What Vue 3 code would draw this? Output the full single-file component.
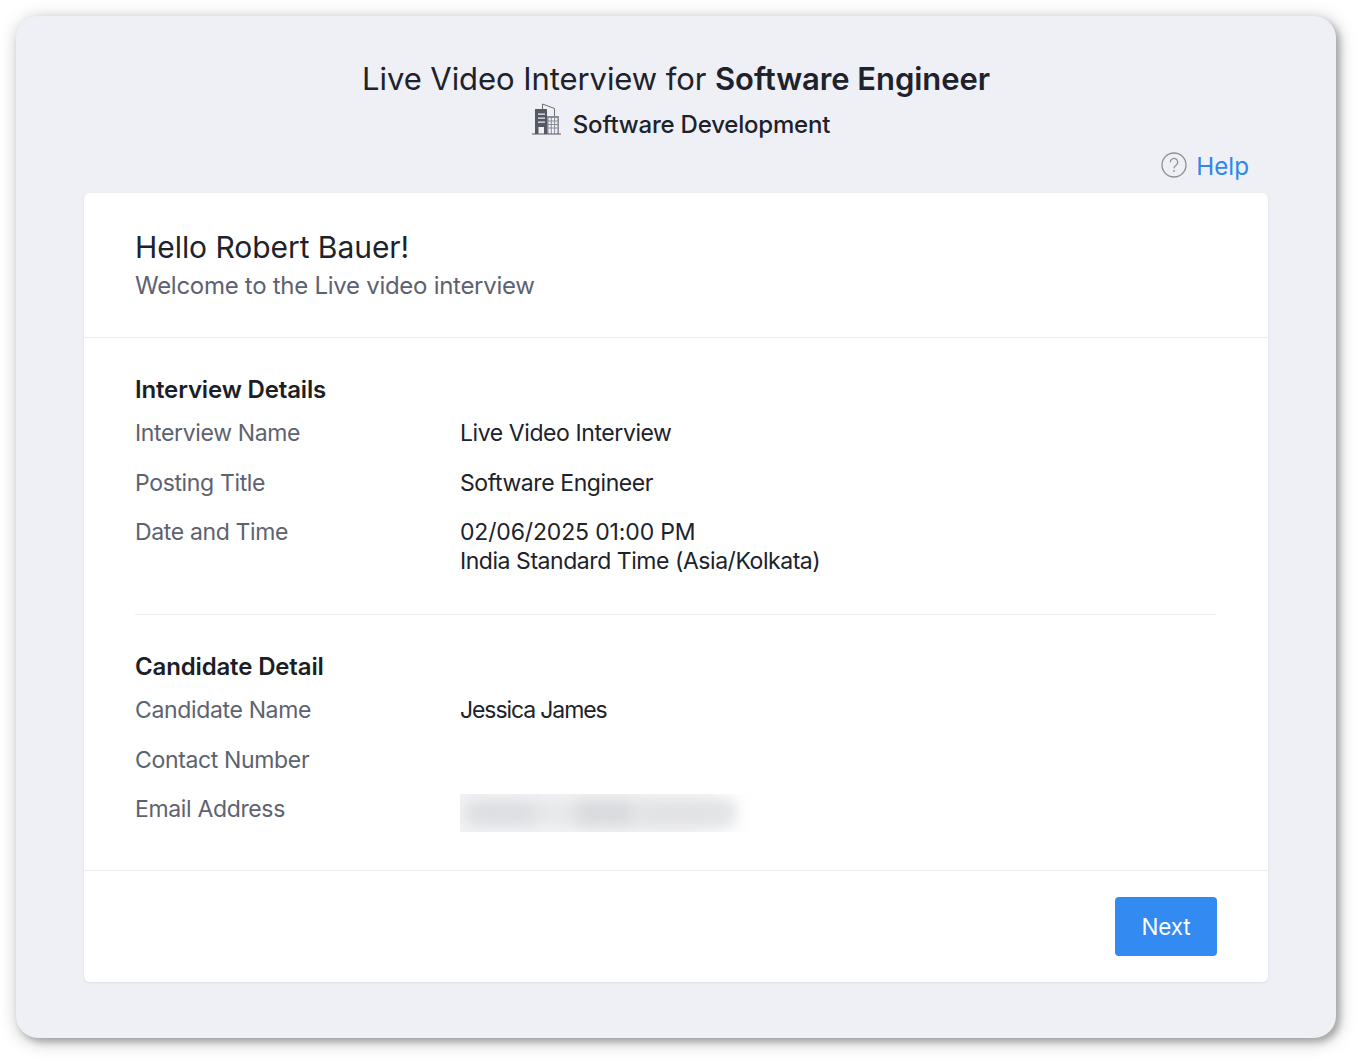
<script setup>
const interview = [
  { label: 'Interview Name', lines: ['Live Video Interview'] },
  { label: 'Posting Title', lines: ['Software Engineer'] },
  { label: 'Date and Time', lines: ['02/06/2025 01:00 PM', 'India Standard Time (Asia/Kolkata)'], date: true },
]
const candidate = [
  { label: 'Candidate Name', lines: ['Jessica James'], name: true },
  { label: 'Contact Number', lines: [] },
]
</script>

<template>
  <div class="page">
    <div class="window">
      <header class="head">
        <h1 class="title">Live Video Interview for <strong>Software Engineer</strong></h1>
        <div class="dept">
          <svg class="building" width="30" height="32" viewBox="0 0 30 32" aria-hidden="true">
            <path d="M10.500 6V1L22.500 5.500V13" fill="none" stroke="#6a6d76" stroke-width="1"/>
            <path fill="#555862" d="M3 6h12v25H3z"/>
            <path fill="#eef0f6" d="M6 10.500h7v1.300H6zM6 14.500h7v1.300H6zM6 18.500h7v1.300H6zM6.500 24h5.500v7H6.500z"/>
            <path fill="#8b8d95" d="M15 13h12v18H15z"/>
            <path fill="#eef0f6" d="M16.500 15h2.300v2.500h-2.300zM19.800 15h2.300v2.500h-2.300zM23.100 15h2.300v2.500h-2.300zM16.500 18.500h2.300V21h-2.300zM19.800 18.500h2.300V21h-2.300zM23.100 18.500h2.300V21h-2.300zM16.500 22h2.300v2.500h-2.300zM19.800 22h2.300v2.500h-2.300zM23.100 22h2.300v2.500h-2.300zM16.500 25.500h2.300V31h-2.300zM19.800 25.500h2.300V31h-2.300zM23.100 25.500h2.300V31h-2.300z"/>
            <path fill="none" stroke="#555862" stroke-width="1" d="M0 31h29"/>
          </svg>
          <span>Software Development</span>
        </div>
        <div class="help">
          <svg class="help-icon" width="26" height="26" viewBox="0 0 26 26" aria-hidden="true">
            <circle cx="13" cy="13" r="12" fill="none" stroke="#8e9096" stroke-width="1.300"/>
            <path d="M9.300 10.200a3.700 3.700 0 1 1 5.700 3.100c-1.300.9-2 1.500-2 3" fill="none" stroke="#8e9096" stroke-width="1.300"/>
            <circle cx="13" cy="19" r="0.900" fill="#8e9096"/>
          </svg>
          <a class="help-link">Help</a>
        </div>
      </header>

      <main class="card">
        <section class="greeting">
          <h2>Hello Robert Bauer!</h2>
          <p>Welcome to the Live video interview</p>
        </section>

        <section class="details">
          <div class="group group-first">
            <h3>Interview Details</h3>
            <div v-for="row in interview" :key="row.label" class="row">
              <div class="label">{{ row.label }}</div>
              <div class="value" :class="{ 'value-date': row.date }">
                <div v-for="line in row.lines" :key="line">{{ line }}</div>
              </div>
            </div>
          </div>

          <div class="group group-second">
            <h3>Candidate Detail</h3>
            <div v-for="row in candidate" :key="row.label" class="row">
              <div class="label">{{ row.label }}</div>
              <div class="value" :class="{ 'value-name': row.name }">
                <div v-for="line in row.lines" :key="line">{{ line }}</div>
              </div>
            </div>
            <div class="row row-email">
              <div class="label">Email Address</div>
              <div class="blurred" aria-hidden="true">
                <i class="smear base"></i><i class="smear one"></i><i class="smear two"></i><i class="smear three"></i>
              </div>
            </div>
          </div>
        </section>

        <footer class="foot">
          <button class="next" type="button">Next</button>
        </footer>
      </main>
    </div>
  </div>
</template>

<style scoped>
.page {
  width: 1360px;
  height: 1062px;
  padding: 16px 24px 24px 16px;
  box-sizing: border-box;
  background: #fff;
  font-family: Inter, "Liberation Sans", sans-serif;
  overflow: hidden;
}
.window {
  height: 1022px;
  box-sizing: border-box;
  padding: 0 68px;
  background: #eef0f6;
  border-radius: 22px;
  box-shadow: 4px 4px 6px rgba(0, 0, 0, 0.22), 2px 3px 18px rgba(0, 0, 0, 0.28);
}
.head {
  height: 177px;
  display: flex;
  flex-direction: column;
  align-items: center;
}
.title {
  margin: 44px 0 0;
  font-size: 31px;
  line-height: 38px;
  font-weight: 400;
  color: #20222b;
  letter-spacing: -0.07px;
}
.title strong {
  font-weight: 600;
}
.dept {
  margin: 7px 0 0 10px;
  display: flex;
  align-items: flex-end;
  gap: 11px;
  font-size: 24px;
  line-height: 32px;
  font-weight: 500;
  color: #20222b;
  letter-spacing: -0.2px;
  height: 36px;
}
.building {
  margin-bottom: 6px;
}
.help {
  align-self: flex-end;
  margin-top: 10px;
  margin-right: 19px;
  display: flex;
  align-items: center;
  gap: 9px;
}
.help-icon {
  margin-bottom: 4px;
}
.help-link {
  font-size: 24.200px;
  line-height: 32px;
  color: #2f86ec;
}
.card {
  background: #fff;
  border-radius: 6px;
  height: 789px;
  display: flex;
  flex-direction: column;
  box-shadow: 0 1px 3px rgba(30, 40, 70, 0.08);
}
.greeting {
  height: 145px;
  box-sizing: border-box;
  padding: 36px 52px 0 51px;
  border-bottom: 1px solid #eceef2;
}
.greeting h2 {
  margin: 0;
  font-size: 30px;
  line-height: 36px;
  font-weight: 400;
  letter-spacing: -0.05px;
  color: #20222b;
}
.greeting p {
  margin: 5px 0 0;
  font-size: 24px;
  line-height: 32px;
  letter-spacing: -0.28px;
  color: #5d6270;
}
.details {
  flex: 1;
  padding: 0 52px 0 51px;
}
.group h3 {
  margin: 0 0 13px;
  font-size: 24px;
  line-height: 32px;
  font-weight: 600;
  letter-spacing: -0.15px;
  color: #1c1e26;
}
.group-first {
  padding: 36px 0 17px;
  border-bottom: 1px solid #eceef2;
}
.group-second {
  padding-top: 36px;
}
.row {
  display: flex;
  font-size: 23px;
  line-height: 29px;
  margin-bottom: 21px;
}
.row + .row + .row {
  margin-top: -1px;
}
.label {
  width: 325px;
  color: #5d6270;
  letter-spacing: -0.35px;
}
.value {
  color: #20222b;
  letter-spacing: -0.42px;
}
.value-date > div:first-child {
  letter-spacing: -0.15px;
}
.value-date > div:last-child {
  letter-spacing: -0.45px;
}
.value-name {
  letter-spacing: -1.1px;
}
.row-email {
  margin-bottom: 0;
  align-items: flex-start;
}
.blurred {
  position: relative;
  width: 292px;
  height: 38px;
  margin-top: -1px;
  overflow: hidden;
  background: linear-gradient(90deg, #f1f2f5 0, #f3f4f6 78%, #fff 100%);
}
.smear {
  position: absolute;
  top: 10px;
  height: 18px;
  border-radius: 9px;
  background: #dcdde0;
  filter: blur(7px);
}
.base { left: 4px; width: 272px; height: 26px; top: 6px; background: #e7e8ea; filter: blur(6px); }
.one { left: 8px; width: 68px; }
.two { left: 116px; width: 58px; height: 24px; top: 7px; background: #d9dadd; }
.three { left: 176px; width: 92px; background: #e1e2e3; }
.foot {
  height: 112px;
  box-sizing: border-box;
  border-top: 1px solid #eceef2;
  padding: 26px 51px 0 0;
  display: flex;
  justify-content: flex-end;
  align-items: flex-start;
}
.next {
  width: 102px;
  height: 59px;
  border: 0;
  border-radius: 4px;
  background: #338af0;
  color: #fff;
  font-family: inherit;
  font-size: 22.500px;
  font-weight: 400;
  letter-spacing: -0.1px;
}
</style>
